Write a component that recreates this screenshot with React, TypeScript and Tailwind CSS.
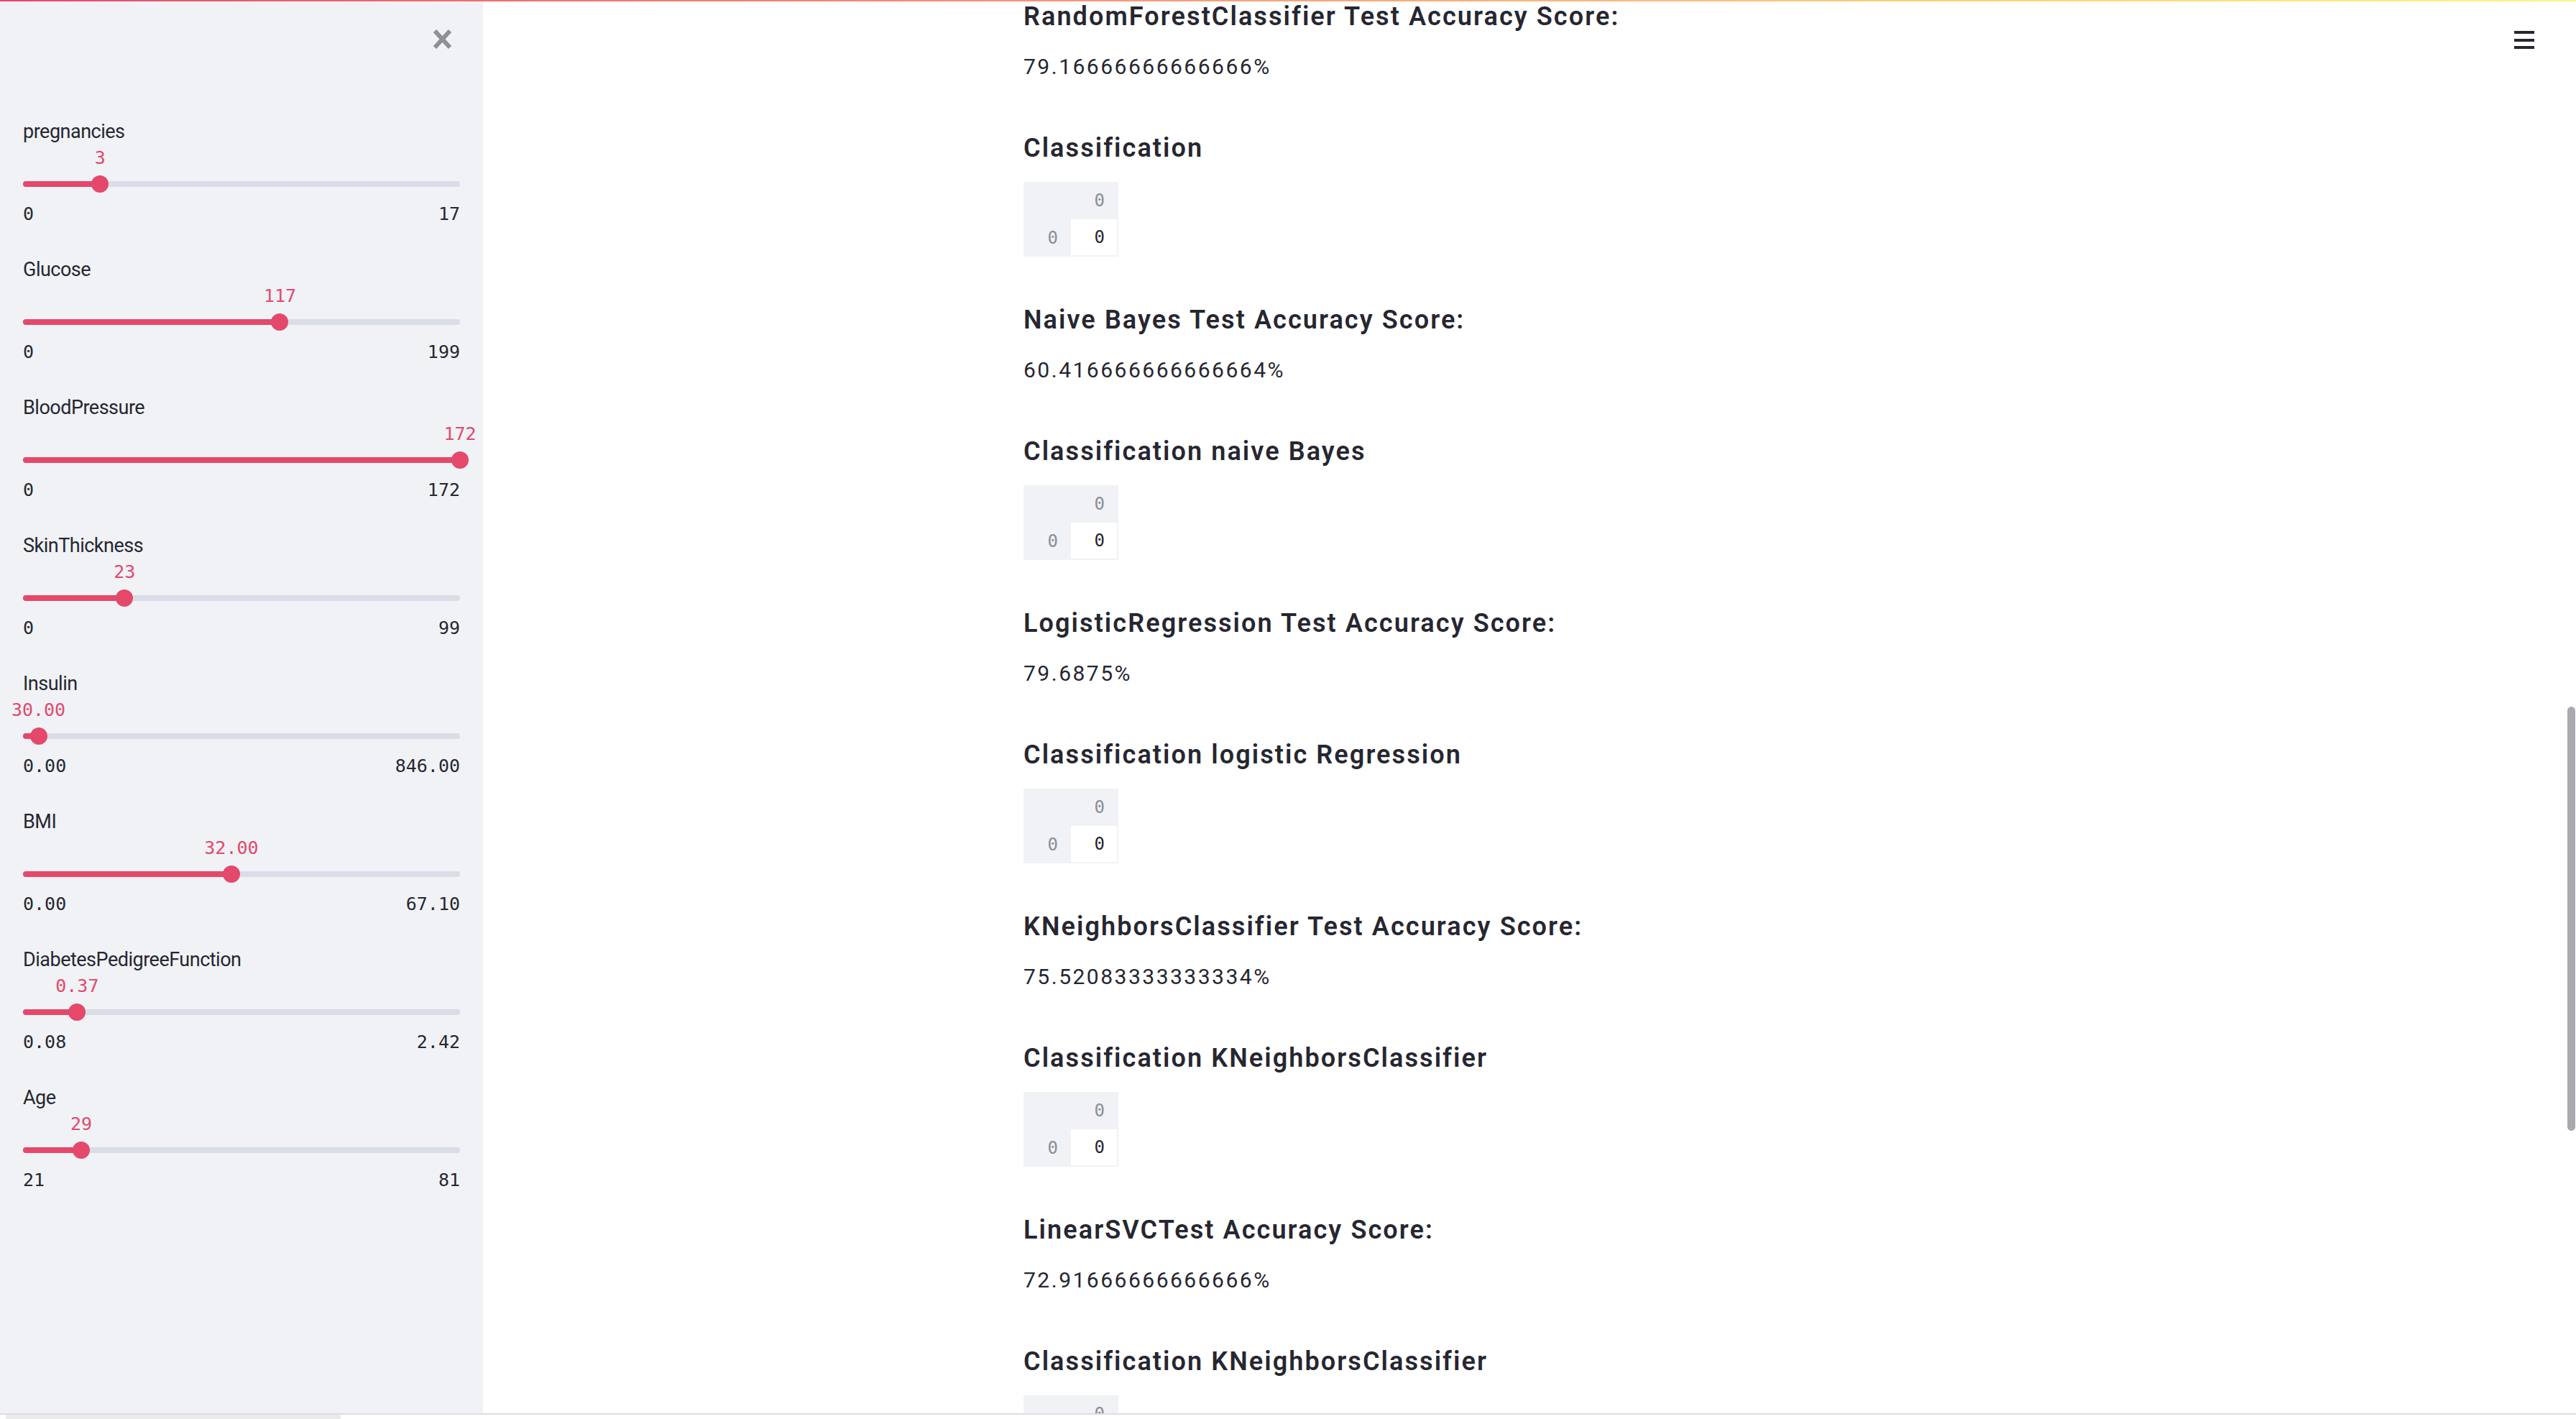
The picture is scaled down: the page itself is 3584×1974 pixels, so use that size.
import React from "react";

const sans = "font-['Roboto','Liberation_Sans',sans-serif]";
const mono = "font-['DejaVu_Sans_Mono','Liberation_Mono',monospace]";

const sliders = [
  { label: "pregnancies", value: "3", min: "0", max: "17", pct: 3 / 17 },
  { label: "Glucose", value: "117", min: "0", max: "199", pct: 117 / 199 },
  { label: "BloodPressure", value: "172", min: "0", max: "172", pct: 1 },
  { label: "SkinThickness", value: "23", min: "0", max: "99", pct: 23 / 99 },
  { label: "Insulin", value: "30.00", min: "0.00", max: "846.00", pct: 30 / 846 },
  { label: "BMI", value: "32.00", min: "0.00", max: "67.10", pct: 32 / 67.1 },
  { label: "DiabetesPedigreeFunction", value: "0.37", min: "0.08", max: "2.42", pct: 0.29 / 2.34 },
  { label: "Age", value: "29", min: "21", max: "81", pct: 8 / 60 },
];

const sections = [
  {
    title: "RandomForestClassifier Test Accuracy Score:",
    score: "79.16666666666666%",
    matrix: "Classification",
  },
  {
    title: "Naive Bayes Test Accuracy Score:",
    score: "60.416666666666664%",
    matrix: "Classification naive Bayes",
  },
  {
    title: "LogisticRegression Test Accuracy Score:",
    score: "79.6875%",
    matrix: "Classification logistic Regression",
  },
  {
    title: "KNeighborsClassifier Test Accuracy Score:",
    score: "75.52083333333334%",
    matrix: "Classification KNeighborsClassifier",
  },
  {
    title: "LinearSVCTest Accuracy Score:",
    score: "72.91666666666666%",
    matrix: "Classification KNeighborsClassifier",
  },
];

function Slider({ s }: { s: (typeof sliders)[number] }) {
  const left = `${s.pct * 100}%`;
  return (
    <div className="flex flex-col h-[192px]">
      <div className={`${sans} mt-[2px] text-[27px] leading-[32px] tracking-[-0.5px] text-[#262730]`}>{s.label}</div>
      <div className="relative h-[30px] mt-[6px]">
        <span
          className={`${mono} absolute top-0 -translate-x-1/2 text-[25px] leading-[30px] text-[#e4496b] whitespace-nowrap`}
          style={{ left }}
        >
          {s.value}
        </span>
      </div>
      <div className="relative h-[24px] mt-[9px] flex items-center">
        <div className="w-full h-[8px] rounded-full bg-[#d9dde6]">
          <div className="h-full rounded-full bg-[#e4496b]" style={{ width: left }} />
        </div>
        <div
          className="absolute top-0 w-[24px] h-[24px] -translate-x-1/2 rounded-full bg-[#e4496b]"
          style={{ left }}
        />
      </div>
      <div className={`${mono} mt-[15px] flex justify-between text-[25px] leading-[30px] text-[#262730]`}>
        <span>{s.min}</span>
        <span>{s.max}</span>
      </div>
    </div>
  );
}

function Matrix() {
  return (
    <div className={`${mono} grid grid-cols-[66px_66px] grid-rows-[52px_52px] w-[132px] bg-[#f0f2f6] text-[24px]`}>
      <div />
      <div className="flex items-center justify-end pr-[19px] text-[#8b8e98]">0</div>
      <div className="flex items-center justify-end pr-[18px] text-[#8b8e98]">0</div>
      <div className="flex items-center justify-end pr-[17px] w-[64px] h-[50px] bg-white text-[#262730]">0</div>
    </div>
  );
}

export default function App() {
  return (
    <div className="relative w-[3584px] h-[1974px] overflow-hidden bg-white flex flex-col">
      <div className="absolute top-0 left-0 right-0 h-[2px] z-10 bg-gradient-to-r from-[#e6486b] to-[#fdf681]" />
      <div className="flex flex-1 min-h-0">
        <aside className="w-[672px] shrink-0 bg-[#f0f2f6] flex flex-col">
          <div className="flex justify-end pt-[40px] pr-[43px]">
            <svg width="27" height="29" viewBox="0 0 27 29">
              <path d="M3 3 L24 26 M24 3 L3 26" stroke="#8e9096" strokeWidth="6" strokeLinecap="butt" />
            </svg>
          </div>
          <div className="mt-[96px] px-[32px] flex flex-col">
            {sliders.map((s) => (
              <Slider key={s.label} s={s} />
            ))}
          </div>
        </aside>
        <main className="relative flex-1 flex justify-center overflow-hidden">
          <div className="w-[1408px] pt-[1px] text-[#262730]">
            {sections.map((sec, i) => (
              <section key={i} className="flex flex-col pb-[66px]">
                <h3 className={`${sans} text-[36px] leading-[44px] tracking-[2.1px] font-semibold`}>{sec.title}</h3>
                <p className={`${sans} mt-[28px] text-[30px] leading-[40px] tracking-[2.5px]`}>{sec.score}</p>
                <h3 className={`${sans} mt-[71px] text-[36px] leading-[44px] tracking-[2.1px] font-semibold`}>{sec.matrix}</h3>
                <div className="mt-[25px]">
                  <Matrix />
                </div>
              </section>
            ))}
          </div>
          <div className="absolute top-[43px] right-[58px] flex flex-col gap-[6.5px]">
            <div className="w-[28px] h-[4px] bg-[#262730]" />
            <div className="w-[28px] h-[4px] bg-[#262730]" />
            <div className="w-[28px] h-[4px] bg-[#262730]" />
          </div>
          <div className="absolute top-[983px] right-[1px] w-[11px] h-[590px] rounded-full bg-[#a9aaae]" />
        </main>
      </div>
      <div className="h-[8px] shrink-0 border-t-2 border-[#dcdde2] bg-white">
        <div className="ml-[8px] w-[466px] h-[6px] bg-[#ebebeb]" />
      </div>
    </div>
  );
}
